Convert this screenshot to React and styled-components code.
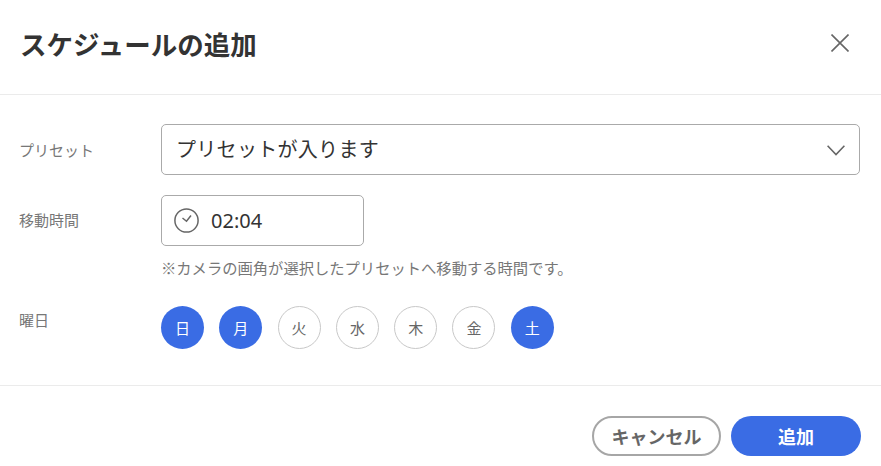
import React from "react";
import styled, { createGlobalStyle } from "styled-components";

const Global = createGlobalStyle`
  html, body { margin: 0; padding: 0; background: #fff; }
  body { font-family: "Noto Sans CJK JP", "Noto Sans", sans-serif; width: 881px; height: 466px; overflow: hidden; }
`;

const Dialog = styled.div`
  width: 881px;
  height: 466px;
  display: flex;
  flex-direction: column;
  color: #333;
`;
const Header = styled.header`
  height: 94px;
  border-bottom: 1px solid #ebebeb;
  display: flex;
  align-items: center;
  justify-content: space-between;
  padding: 0 32px 0 20px;
`;
const Title = styled.h1`
  margin: 0 0 7px;
  font-size: 26.5px;
  font-weight: 700;
  color: #333;
`;
const Close = styled.button`
  border: 0;
  background: none;
  padding: 0;
  width: 18px;
  height: 18px;
  margin-bottom: 8px;
  display: block;
  color: #666;
  svg { display: block; }
`;
const Body = styled.main`
  flex: 0 0 291px;
  box-sizing: border-box;
  padding: 29px 21px 0 19px;
  border-bottom: 1px solid #ebebeb;
  display: flex;
  flex-direction: column;
`;
const Row = styled.div`
  display: grid;
  grid-template-columns: 142px 1fr;
  align-items: ${(p) => p.$align || "center"};
  margin-bottom: ${(p) => p.$gap || 0}px;
`;
const Label = styled.div`
  font-size: 15px;
  color: #777;
  padding-top: ${(p) => p.$top || 0}px;
  padding-bottom: ${(p) => p.$bottom || 0}px;
`;
const Select = styled.div`
  height: 51px;
  box-sizing: border-box;
  border: 1.5px solid #aaa;
  border-radius: 5px;
  display: flex;
  align-items: center;
  justify-content: space-between;
  padding: 0 14px 2px 14px;
  font-size: 20px;
  color: #333;
  letter-spacing: 0.3px;
  svg { margin-top: 4px; }
`;
const TimeBox = styled.div`
  width: 202.5px;
  height: 51px;
  box-sizing: border-box;
  border: 1.5px solid #aaa;
  border-radius: 5px;
  display: flex;
  align-items: center;
  gap: 12.5px;
  padding-left: 11.5px;
  font-size: 20px;
  color: #333;
  font-family: "Noto Sans", sans-serif;
`;
const Hint = styled.p`
  margin: 10px 0 0;
  font-size: 15.3px;
  line-height: 22px;
  white-space: nowrap;
  color: #777;
`;
const Days = styled.div`
  display: flex;
  gap: 15.3px;
`;
const Day = styled.div`
  width: 43px;
  height: 43px;
  box-sizing: border-box;
  border-radius: 50%;
  display: flex;
  align-items: center;
  justify-content: center;
  font-size: 15px;
  background: ${(p) => (p.$on ? "#3a6ce4" : "#fff")};
  color: ${(p) => (p.$on ? "#fff" : "#666")};
  border: ${(p) => (p.$on ? "0" : "1.5px solid #c8c8c8")};
`;
const Footer = styled.footer`
  display: flex;
  justify-content: flex-end;
  gap: 10px;
  padding: 30px 20px 0 0;
`;
const Button = styled.button`
  width: ${(p) => (p.$primary ? 130 : 129)}px;
  height: 40px;
  box-sizing: border-box;
  border-radius: 20px;
  font-family: inherit;
  font-size: 18px;
  font-weight: 700;
  padding: 0;
  background: ${(p) => (p.$primary ? "#3a6ce4" : "#fff")};
  color: ${(p) => (p.$primary ? "#fff" : "#666")};
  border: ${(p) => (p.$primary ? "0" : "2.5px solid #a6a6a6")};
`;

const days = [
  ["日", true],
  ["月", true],
  ["火", false],
  ["水", false],
  ["木", false],
  ["金", false],
  ["土", true],
];

export default function App() {
  return (
    <Dialog>
      <Global />
      <Header>
        <Title>スケジュールの追加</Title>
        <Close aria-label="close">
          <svg width="18" height="18" viewBox="0 0 18 18" fill="none" stroke="currentColor" strokeWidth="1.6">
            <path d="M0.5 0.5L17.5 17.5M17.5 0.5L0.5 17.5" />
          </svg>
        </Close>
      </Header>
      <Body>
        <Row $gap={20}>
          <Label>プリセット</Label>
          <Select>
            プリセットが入ります
            <svg width="18" height="11" viewBox="0 0 18 11" fill="none" stroke="#666" strokeWidth="1.6">
              <path d="M0.6 0.8L9 9.5L17.4 0.8" />
            </svg>
          </Select>
        </Row>
        <Row>
          <Label $bottom={3}>移動時間</Label>
          <TimeBox>
            <svg width="25" height="25" viewBox="0 0 25 25" fill="none" stroke="#666" strokeWidth="1.5">
              <circle cx="12.5" cy="12.5" r="11.6" />
              <path d="M8.5 10L12.5 13.3L17 7.5" />
            </svg>
            02:04
          </TimeBox>
        </Row>
        <Row $gap={28}>
          <span />
          <Hint>※カメラの画角が選択したプリセットへ移動する時間です。</Hint>
        </Row>
        <Row $align="start">
          <Label $top={3}>曜日</Label>
          <Days>
            {days.map(([d, on]) => (
              <Day key={d} $on={on}>{d}</Day>
            ))}
          </Days>
        </Row>
      </Body>
      <Footer>
        <Button>キャンセル</Button>
        <Button $primary>追加</Button>
      </Footer>
    </Dialog>
  );
}
